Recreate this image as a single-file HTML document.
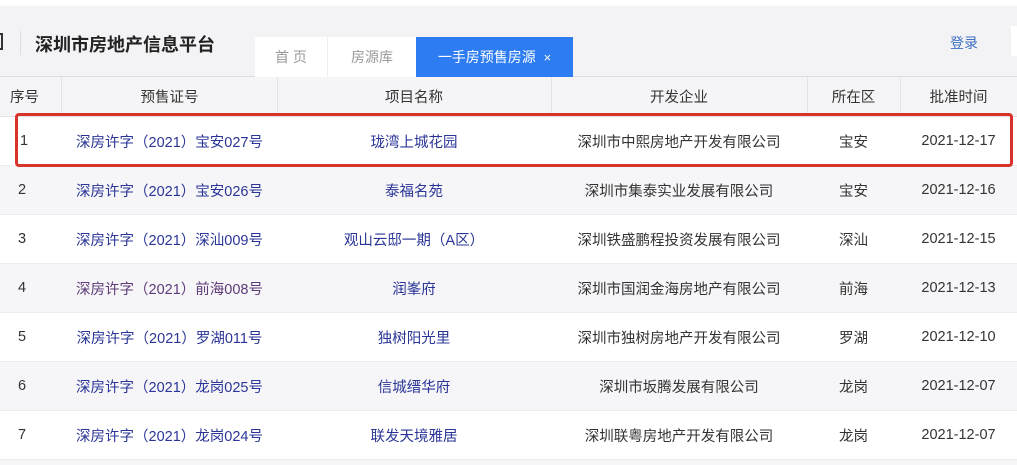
<!DOCTYPE html>
<html><head><meta charset="utf-8"><style>
*{margin:0;padding:0;box-sizing:border-box}
body{width:1017px;height:465px;overflow:hidden;background:#fff;font-family:"Liberation Sans","Noto Sans CJK SC",sans-serif;position:relative;color:#333}
.hdr{position:absolute;left:0;top:6px;width:1017px;height:71px;background:#f3f3f5;border-bottom:1px solid #dcdde2}
.abs{position:absolute;white-space:nowrap}
.title{left:35px;top:31px;font-size:18px;font-weight:bold;color:#222}
.tab{position:absolute;top:37px;height:40px;line-height:40px;font-size:14px;text-align:center;background:#fff;color:#999}
.th{position:absolute;top:77px;height:40px;width:1017px;background:#f5f5f7;border-bottom:1px solid #e3e3e6}
.row{position:absolute;left:0;width:1017px;height:49px;border-bottom:1px solid #ececef}
.c{position:absolute;top:0;height:100%;display:flex;align-items:center;justify-content:center;font-size:14.5px;white-space:nowrap}
.l{color:#2a3597}
.v{color:#5e3b78}
.sep{position:absolute;top:0;width:1px;height:40px;background:#e3e3e6}
</style></head><body>
<div class="hdr"></div>
<div class="abs" style="left:0;top:33px;width:3px;height:17px;border:2px solid #333;border-left:none"></div>
<div class="abs" style="left:20px;top:31px;width:1px;height:24px;background:#ddd"></div>
<div class="abs title">深圳市房地产信息平台</div>
<div class="tab" style="left:255px;width:73px;border-right:1px solid #eee">首 页</div>
<div class="tab" style="left:328px;width:88px">房源库</div>
<div class="tab" style="left:416px;width:157px;background:#2e7cf2;color:#fff">一手房预售房源&nbsp; <span style="font-size:13px">×</span></div>
<div class="abs" style="left:950px;top:33px;font-size:14px;color:#3d6fc2">登录</div>
<div class="abs" style="left:1011px;top:26px;width:6px;height:30px;background:#fff"></div>
<div class="th">
<div class="c" style="left:0;width:62px;justify-content:flex-start;padding-left:10px">序号</div>
<div class="c" style="left:62px;width:215px">预售证号</div>
<div class="c" style="left:277px;width:274px">项目名称</div>
<div class="c" style="left:551px;width:256px">开发企业</div>
<div class="c" style="left:807px;width:93px">所在区</div>
<div class="c" style="left:900px;width:117px">批准时间</div>
<div class="sep" style="left:61px"></div><div class="sep" style="left:277px"></div><div class="sep" style="left:551px"></div><div class="sep" style="left:807px"></div><div class="sep" style="left:900px"></div>
</div>
<div class="row" style="top:117px;background:#fff"><div class="c" style="left:20px">1</div><div class="c l" style="left:62px;width:215px">深房许字（2021）宝安027号</div><div class="c l" style="left:277px;width:274px">珑湾上城花园</div><div class="c" style="left:551px;width:256px">深圳市中熙房地产开发有限公司</div><div class="c" style="left:807px;width:93px">宝安</div><div class="c" style="left:900px;width:117px">2021-12-17</div></div>
<div class="row" style="top:166px;background:#f6f6f8"><div class="c" style="left:18px">2</div><div class="c l" style="left:62px;width:215px">深房许字（2021）宝安026号</div><div class="c l" style="left:277px;width:274px">泰福名苑</div><div class="c" style="left:551px;width:256px">深圳市集泰实业发展有限公司</div><div class="c" style="left:807px;width:93px">宝安</div><div class="c" style="left:900px;width:117px">2021-12-16</div></div>
<div class="row" style="top:215px;background:#fff"><div class="c" style="left:18px">3</div><div class="c l" style="left:62px;width:215px">深房许字（2021）深汕009号</div><div class="c l" style="left:277px;width:274px">观山云邸一期（A区）</div><div class="c" style="left:551px;width:256px">深圳铁盛鹏程投资发展有限公司</div><div class="c" style="left:807px;width:93px">深汕</div><div class="c" style="left:900px;width:117px">2021-12-15</div></div>
<div class="row" style="top:264px;background:#f6f6f8"><div class="c" style="left:18px">4</div><div class="c v" style="left:62px;width:215px">深房许字（2021）前海008号</div><div class="c l" style="left:277px;width:274px">润峯府</div><div class="c" style="left:551px;width:256px">深圳市国润金海房地产有限公司</div><div class="c" style="left:807px;width:93px">前海</div><div class="c" style="left:900px;width:117px">2021-12-13</div></div>
<div class="row" style="top:313px;background:#fff"><div class="c" style="left:18px">5</div><div class="c l" style="left:62px;width:215px">深房许字（2021）罗湖011号</div><div class="c l" style="left:277px;width:274px">独树阳光里</div><div class="c" style="left:551px;width:256px">深圳市独树房地产开发有限公司</div><div class="c" style="left:807px;width:93px">罗湖</div><div class="c" style="left:900px;width:117px">2021-12-10</div></div>
<div class="row" style="top:362px;background:#f6f6f8"><div class="c" style="left:18px">6</div><div class="c l" style="left:62px;width:215px">深房许字（2021）龙岗025号</div><div class="c l" style="left:277px;width:274px">信城缙华府</div><div class="c" style="left:551px;width:256px">深圳市坂腾发展有限公司</div><div class="c" style="left:807px;width:93px">龙岗</div><div class="c" style="left:900px;width:117px">2021-12-07</div></div>
<div class="row" style="top:411px;background:#fff"><div class="c" style="left:18px">7</div><div class="c l" style="left:62px;width:215px">深房许字（2021）龙岗024号</div><div class="c l" style="left:277px;width:274px">联发天境雅居</div><div class="c" style="left:551px;width:256px">深圳联粤房地产开发有限公司</div><div class="c" style="left:807px;width:93px">龙岗</div><div class="c" style="left:900px;width:117px">2021-12-07</div></div>
<div class="abs" style="left:0;top:460px;width:1017px;height:5px;background:#f6f6f8"></div>
<div class="abs" style="left:15px;top:113px;width:998px;height:54px;border:3px solid #d8332b;border-radius:4px"></div>
</body></html>
